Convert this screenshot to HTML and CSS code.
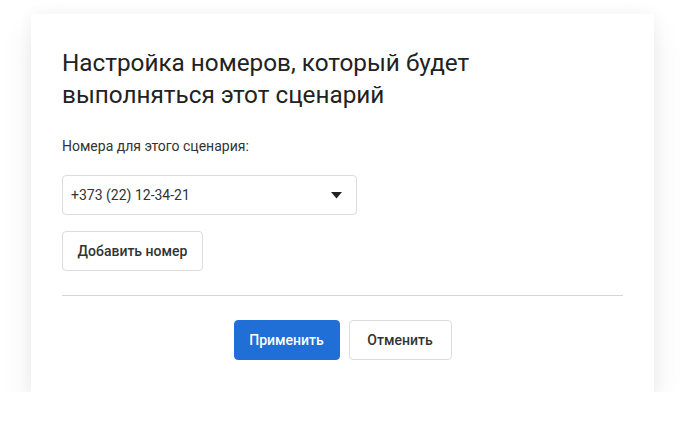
FILE: index.html
```html
<!DOCTYPE html>
<html lang="ru">
<head>
<meta charset="utf-8">
<link rel="stylesheet" href="styles.css">
</head>
<body>
<div class="card">
  <h1 class="title">Настройка номеров, который будет выполняться этот сценарий</h1>
  <div class="label">Номера для этого сценария:</div>
  <div class="select">
    <span class="select-value">+373 (22) 12-34-21</span>
    <svg class="caret" width="11" height="7" viewBox="0 0 11 7"><path d="M0 0 H11 L5.5 6.5 Z" fill="#222"/></svg>
  </div>
  <button class="btn btn-add">Добавить номер</button>
  <hr class="divider">
  <div class="actions">
    <button class="btn btn-primary">Применить</button>
    <button class="btn btn-cancel">Отменить</button>
  </div>
</div>
</body>
</html>
```
FILE: styles.css
```css
html, body {
  margin: 0;
  padding: 0;
  background: #fff;
}
body {
  font-family: Roboto, "Noto Sans", sans-serif;
  color: #333;
  padding: 14px 30px 0 31px;
}
.card {
  width: 561px;
  height: 316px;
  padding: 31px 31px 31px 31px;
  background: #fff;
  box-shadow: 0 14px 30px rgba(0, 0, 0, 0.08), 0 0 14px rgba(0,0,0,0.04);
  display: flex;
  flex-direction: column;
  align-items: flex-start;
}
.title {
  margin: 2px 0 0 0;
  font-size: 24.3px;
  font-weight: 400;
  line-height: 32px;
  color: #222;
  width: 460px;
}
.label {
  margin-top: 25px;
  font-size: 14px;
  line-height: 20px;
  color: #333;
}
.select {
  margin-top: 19px;
  box-sizing: border-box;
  width: 295px;
  height: 40px;
  border: 1px solid #dcdcdc;
  border-radius: 4px;
  display: flex;
  align-items: center;
  justify-content: space-between;
  padding: 0 14px 0 8px;
  font-size: 14px;
  color: #333;
}
.caret {
  display: block;
}
.btn {
  box-sizing: border-box;
  height: 40px;
  font-family: Roboto, "Noto Sans", sans-serif;
  font-size: 14px;
  font-weight: 500;
  border-radius: 4px;
  cursor: pointer;
}
.btn-add {
  margin-top: 16px;
  width: 141px;
  background: #fff;
  border: 1px solid #dcdcdc;
  color: #333;
}
.divider {
  align-self: stretch;
  margin: 24px 0 0 0;
  border: none;
  border-top: 1px solid #d6d6d6;
  height: 0;
}
.actions {
  align-self: stretch;
  margin-top: 24px;
  display: flex;
  justify-content: center;
  gap: 9px;
}
.btn-primary {
  width: 106px;
  background: #1f6fd6;
  border: 1px solid #1f6fd6;
  color: #fff;
}
.btn-cancel {
  width: 103px;
  background: #fff;
  border: 1px solid #dcdcdc;
  color: #333;
}
```
